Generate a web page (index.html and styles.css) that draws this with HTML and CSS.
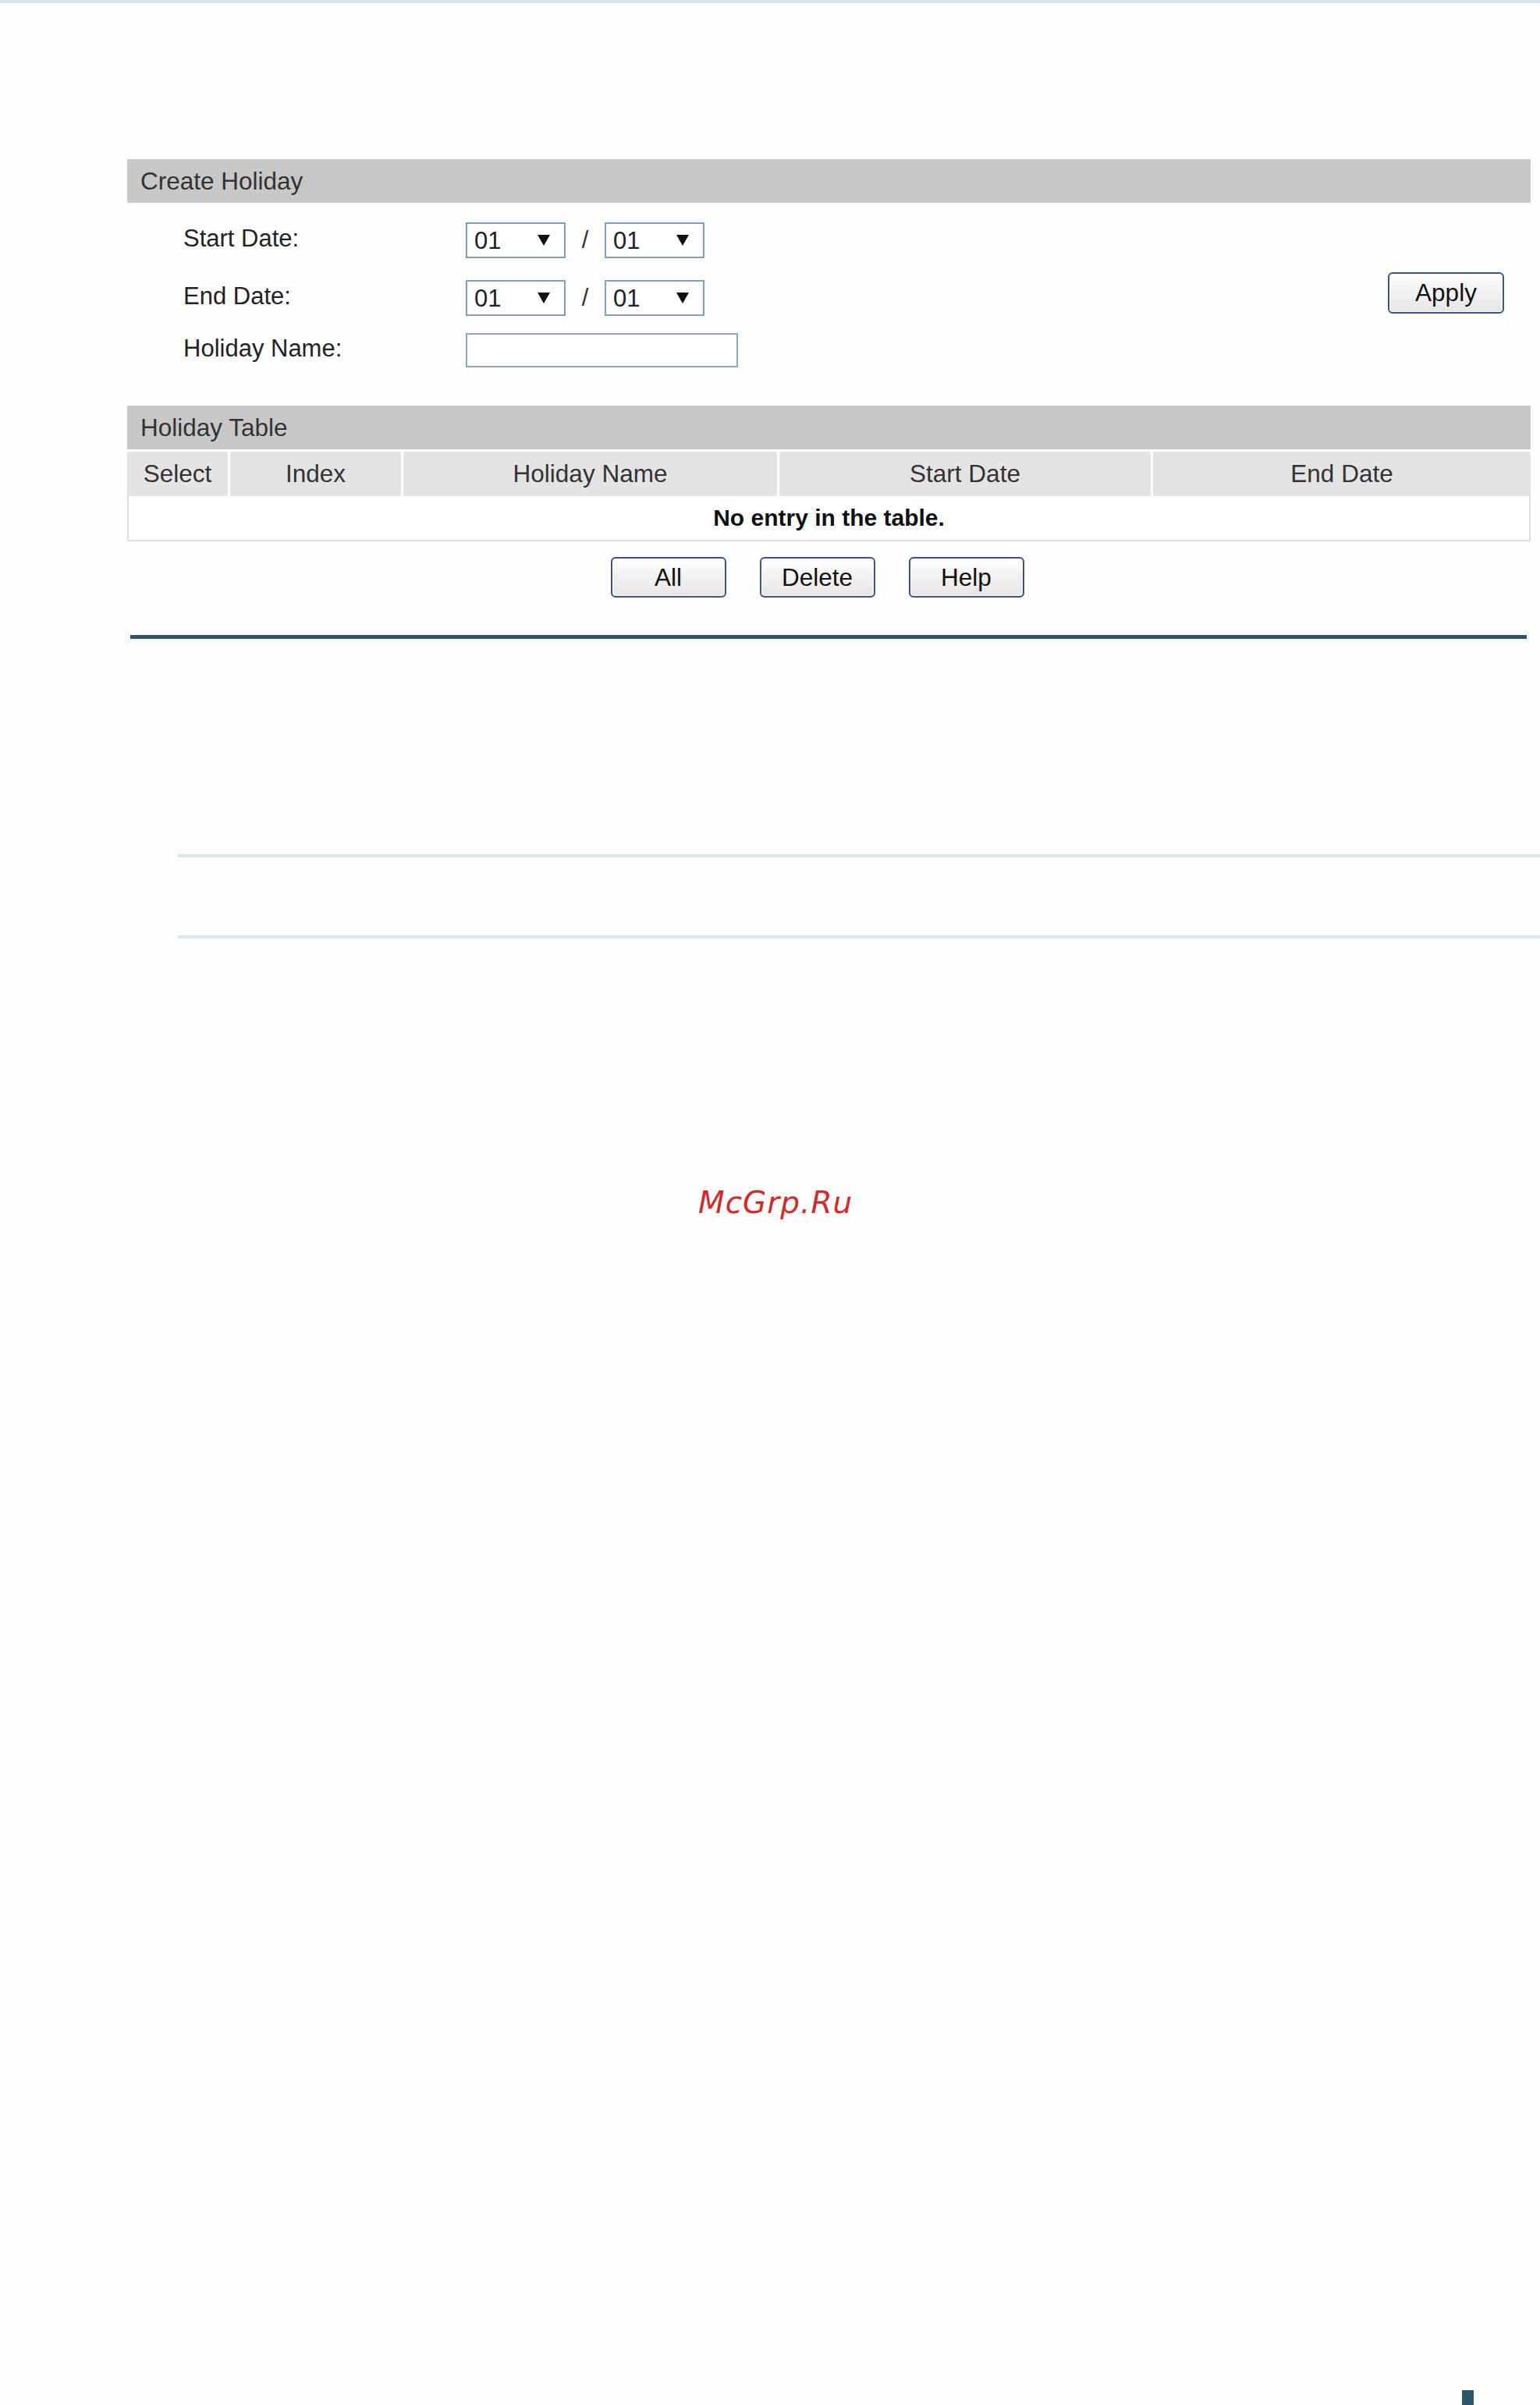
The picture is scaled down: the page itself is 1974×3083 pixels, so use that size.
FILE: index.html
```html
<!DOCTYPE html>
<html lang="en">
<head>
<meta charset="utf-8">
<title>Create Holiday</title>
<link rel="stylesheet" href="styles.css">
</head>
<body>
<div class="page">
  <div class="topline"></div>

  <div class="panel">
    <div class="bar">Create Holiday</div>
    <div class="form">
      <div class="fields">
        <div class="row">
          <div class="label">Start Date:</div>
          <div class="select"><span>01</span><svg class="arrow" viewBox="0 0 16 14"><polygon points="0,0 16,0 8,14"/></svg></div>
          <div class="slash">/</div>
          <div class="select"><span>01</span><svg class="arrow" viewBox="0 0 16 14"><polygon points="0,0 16,0 8,14"/></svg></div>
        </div>
        <div class="row second">
          <div class="label">End Date:</div>
          <div class="select"><span>01</span><svg class="arrow" viewBox="0 0 16 14"><polygon points="0,0 16,0 8,14"/></svg></div>
          <div class="slash">/</div>
          <div class="select"><span>01</span><svg class="arrow" viewBox="0 0 16 14"><polygon points="0,0 16,0 8,14"/></svg></div>
        </div>
        <div class="row third">
          <div class="label">Holiday Name:</div>
          <div class="textbox"></div>
        </div>
      </div>
      <div class="btn apply">Apply</div>
    </div>

    <div class="bar">Holiday Table</div>
    <div class="thead">
      <div class="th">Select</div>
      <div class="th">Index</div>
      <div class="th">Holiday Name</div>
      <div class="th">Start Date</div>
      <div class="th">End Date</div>
    </div>
    <div class="empty">No entry in the table.</div>
    <div class="actions">
      <div class="btn">All</div>
      <div class="btn">Delete</div>
      <div class="btn">Help</div>
    </div>
    <div class="rule"></div>
  </div>

  <div class="light-rule first"></div>
  <div class="light-rule second"></div>

  <div class="watermark">McGrp.Ru</div>

  <div class="corner"></div>
</div>
</body>
</html>
```

FILE: styles.css
```css
html, body {
  margin: 0;
  padding: 0;
  background: #fefefe;
}

.page {
  min-height: 3083px;
  display: flex;
  flex-direction: column;
  font-family: "Liberation Sans", Arial, sans-serif;
  color: #222;
}

.topline {
  height: 4px;
  background: #dce6ea;
}

.panel {
  margin: 200px 12px 0 163px;
  width: 1799px;
  font-size: 32px;
}

.bar {
  height: 56px;
  line-height: 56px;
  padding-left: 17px;
  background: #c8c8c8;
  color: #333;
  font-size: 31.5px;
}

.form {
  display: flex;
  padding: 25px 34px 49px 72px;
}

.fields {
  flex: 1;
  display: flex;
  flex-direction: column;
}

.row {
  display: flex;
  align-items: center;
  height: 46px;
}

.row.second {
  margin-top: 28px;
}

.row.third {
  margin-top: 22px;
  height: 44px;
}

.label {
  width: 362px;
  padding-bottom: 5px;
  font-size: 31px;
  color: #222;
}

.select {
  box-sizing: border-box;
  width: 128px;
  height: 46px;
  border: 2px solid #809ec2;
  background: #fff;
  display: flex;
  align-items: center;
  justify-content: space-between;
  padding: 0 18px 0 9px;
  font-size: 31px;
}

.select span {
  line-height: 1;
}

.arrow {
  width: 16px;
  height: 14px;
  fill: #111;
}

.slash {
  width: 50px;
  text-align: center;
  color: #333;
  font-size: 31px;
}

.textbox {
  box-sizing: border-box;
  width: 349px;
  height: 44px;
  border: 2px solid #8aa6c6;
  background: #fff;
}

.btn {
  box-sizing: border-box;
  width: 148px;
  height: 52px;
  border: 2px solid #3a5585;
  border-radius: 6px;
  background: linear-gradient(#ffffff, #f2f2f2 45%, #e6e6e6);
  box-shadow: inset 0 0 0 1px #fafafa;
  display: flex;
  align-items: center;
  justify-content: center;
  color: #111;
  font-size: 31.5px;
}

.apply {
  align-self: flex-start;
  margin-top: 64px;
  width: 149px;
  height: 53px;
}

.thead {
  margin-top: 3px;
  display: grid;
  grid-template-columns: 129px 219px 479px 476px 1fr;
  column-gap: 3px;
}

.th {
  height: 57px;
  background: #e4e4e4;
  display: flex;
  align-items: center;
  justify-content: center;
  color: #333;
  font-size: 31.5px;
}

.empty {
  box-sizing: border-box;
  height: 58px;
  border: 2px solid #dedede;
  border-top: 0;
  background: #fff;
  display: flex;
  align-items: center;
  justify-content: center;
  font-weight: bold;
  font-size: 30px;
  color: #111;
}

.actions {
  margin-top: 20px;
  display: flex;
  justify-content: center;
  gap: 43px;
  padding-right: 30px;
}

.rule {
  margin: 48px 5px 0 4px;
  height: 5px;
  background: #2d5568;
}

.light-rule {
  height: 4px;
  margin-left: 228px;
  background: #dce6ea;
}

.light-rule.first {
  margin-top: 276px;
}

.light-rule.second {
  margin-top: 100px;
}

.watermark {
  margin: 319px 0 0 895px;
  font-family: "DejaVu Sans", sans-serif;
  font-style: italic;
  font-size: 39px;
  line-height: 39px;
  letter-spacing: 1px;
  color: #d42a2a;
}

.corner {
  margin: auto 0 0 1874px;
  width: 15px;
  height: 19px;
  background: #2b5568;
}
```
